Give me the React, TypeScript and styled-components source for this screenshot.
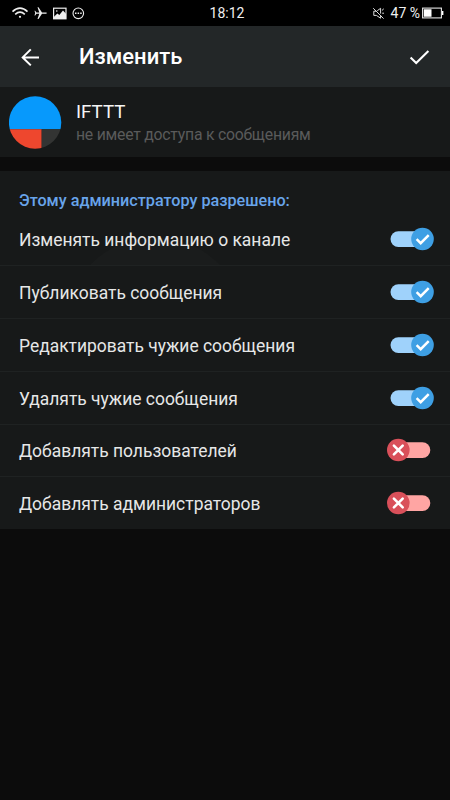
import React from 'react';
import styled, { createGlobalStyle } from 'styled-components';

const GlobalStyle = createGlobalStyle`
  * { box-sizing: border-box; }
  body { margin: 0; background: #0c0c0c; font-family: Roboto, sans-serif; }
`;

const Screen = styled.div`
  width: 450px;
  height: 800px;
  display: flex;
  flex-direction: column;
  background: #0c0c0c;
  overflow: hidden;
`;

const StatusBar = styled.header`
  height: 26px;
  display: grid;
  grid-template-columns: 1fr auto 1fr;
  align-items: center;
  background: #000;
  color: #f0f0f0;
  font-size: 14px;
  line-height: 26px;
  padding: 0 6px 0 11px;
`;

const StatusIcons = styled.div`
  display: flex;
  height: 26px;
`;

const Clock = styled.time`
  margin-right: 1px;
`;

const StatusRight = styled.div`
  display: flex;
  align-items: center;
  justify-content: flex-end;
  white-space: pre;
`;

const Percent = styled.span`
  margin: 0 2px 0 6px;
`;

const Toolbar = styled.div`
  height: 61px;
  display: flex;
  align-items: center;
  padding: 0 18px 0 18px;
  background: #232728;
`;

const IconButton = styled.button`
  display: flex;
  padding: 0;
  border: 0;
  background: none;
  color: #fff;
`;

const Title = styled.h1`
  flex: 1;
  margin: 0 0 0 37px;
  padding-top: 1px;
  color: #fff;
  font-size: 22px;
  font-weight: 500;
  line-height: 30px;
`;

const Profile = styled.section`
  height: 70px;
  display: flex;
  align-items: center;
  padding-left: 9px;
  background: #171919;
`;

const Names = styled.div`
  margin-left: 14px;
  padding-top: 1px;
`;

const Name = styled.div`
  color: #f5f5f5;
  font-size: 18.7px;
  line-height: 24px;
`;

const Access = styled.div`
  color: #5a5b5b;
  font-size: 15.8px;
  letter-spacing: -0.24px;
  line-height: 22px;
`;

const Permissions = styled.section`
  margin-top: 14px;
  height: 358.4px;
  background: #171919;
`;

const SectionTitle = styled.h2`
  margin: 0;
  height: 42px;
  padding: 18px 0 0 19px;
  color: #68a4ea;
  font-size: 16.2px;
  font-weight: 500;
  line-height: 24px;
`;

const List = styled.ul`
  margin: 0;
  padding: 0;
  list-style: none;
`;

const Row = styled.li<{ $glow: boolean }>`
  height: 52.88px;
  display: flex;
  align-items: center;
  justify-content: space-between;
  padding: 0 16px 0 19px;
  border-bottom: 1px solid #1f2222;
  background: ${(p) => (p.$glow ? 'radial-gradient(circle 90px at 155px 114px, #1a1c1c 99%, transparent 100%)' : 'none')};
  &:last-child { border-bottom-color: transparent; }
`;

const Label = styled.span`
  padding-top: 2px;
  color: #e6e7e7;
  font-size: 17.45px;
  line-height: 26px;
`;

const SwitchButton = styled.button`
  width: 47px;
  height: 24px;
  padding: 0;
  border: 0;
  background: none;
  display: flex;
  svg { display: block; }
`;

function Switch({ on }: { on: boolean }) {
  return (
    <SwitchButton role="switch" aria-checked={on}>
      <svg width="47" height="24" viewBox="0 0 47 24" fill="none">
        <rect x="3.5" y="4.2" width="39.8" height="15.8" rx="7.9" fill={on ? '#9fd2fb' : '#ffa5a3'} />
        <circle cx={on ? 35.5 : 11.3} cy="12" r="11.3" fill={on ? '#3e9fe4' : '#d9505a'} />
        {on ? (
          <path d="M29.6 12.2 33.7 16.2 41.7 8.1" stroke="#fff" strokeWidth="2.5" />
        ) : (
          <path d="M6.9 7.6 15.7 16.4 M15.7 7.6 6.9 16.4" stroke="#fff" strokeWidth="2.6" strokeLinecap="round" />
        )}
      </svg>
    </SwitchButton>
  );
}

const permissions = [
  { label: 'Изменять информацию о канале', on: true },
  { label: 'Публиковать сообщения', on: true },
  { label: 'Редактировать чужие сообщения', on: true },
  { label: 'Удалять чужие сообщения', on: true },
  { label: 'Добавлять пользователей', on: false },
  { label: 'Добавлять администраторов', on: false },
];

export default function App() {
  return (
    <>
      <GlobalStyle />
      <Screen>
        <StatusBar>
          <StatusIcons>
            <svg width="76" height="26" viewBox="11 0 76 26" fill="none" stroke="#eee">
              <path d="M12.5 11.6Q20 4.6 27.5 11.6M15.2 14.3Q20 10 24.8 14.3" strokeWidth="1.6" />
              <circle cx="20" cy="16.8" r="1.1" fill="#eee" stroke="none" />
              <path d="M47.2 13.1 46 12.4H42L38.5 7.2H37.5L39.3 12.4H36.4L35.2 10.7H34.5L35.2 13.1 34.5 15.5H35.2L36.4 13.8H39.3L37.5 19H38.5L42 13.8H46Z" fill="#eee" stroke="none" />
              <rect x="53.6" y="8.2" width="12.4" height="10.6" strokeWidth="1.2" />
              <path d="M54 16.8 57.4 13.4 59.3 15 63 10.6 66 13.8V19H54Z" fill="#eee" stroke="none" />
              <circle cx="56.8" cy="11" r=".8" fill="#eee" stroke="none" />
              <circle cx="78.3" cy="13.3" r="5.3" strokeWidth="1.1" />
              <path d="M75 13.3h1.5m1.1 0h1.5m1.1 0h1.5" strokeWidth="1.4" />
            </svg>
          </StatusIcons>
          <Clock>18:12</Clock>
          <StatusRight>
            <svg width="12" height="26" viewBox="0 0 12 26" fill="none" stroke="#ddd" strokeWidth="1">
              <path d="M4.2 10.8 7.6 8.3V13.6M3.4 11.2H.8V15.4H3.4L7.6 18.2V15.4M.2 8.2 10.6 18.6" />
              <path d="M9 10.4 10.8 8.8M9.2 13.2H11" />
            </svg>
            <Percent>47 %</Percent>
            <svg width="22" height="26" viewBox="0 0 22 26" fill="none">
              <rect x=".6" y="8.1" width="18.8" height="9.8" stroke="#e5e5e5" strokeWidth="1.1" />
              <path d="M1.8 9.3h7.7v7.4H1.8Z M20 11h1.4v4H20Z" fill="#fff" />
            </svg>
          </StatusRight>
        </StatusBar>
        <Toolbar>
          <IconButton aria-label="Назад">
            <svg width="24" height="24" viewBox="0 0 24 24" fill="none" stroke="currentColor" strokeWidth="2">
              <path d="M21 12.4H5M12.8 4.4 4.7 12.4 12.8 20.4" />
            </svg>
          </IconButton>
          <Title>Изменить</Title>
          <IconButton aria-label="Готово">
            <svg width="24" height="24" viewBox="0 0 24 24" fill="none" stroke="currentColor" strokeWidth="2.1">
              <path d="M2.6 12.6 8.2 18.1 20.4 6" />
            </svg>
          </IconButton>
        </Toolbar>
        <Profile>
          <svg width="53" height="53" viewBox="0 0 53 53">
            <clipPath id="avatar"><circle cx="26.1" cy="26.5" r="26.2" /></clipPath>
            <g clipPath="url(#avatar)">
              <path d="M0 0H53V33.2H0Z" fill="#0799fc" />
              <path d="M0 33.2H32.7V53H0Z" fill="#ee472e" />
              <path d="M32.7 33.2H53V53H32.7Z" fill="#333433" />
            </g>
          </svg>
          <Names>
            <Name>IFTTT</Name>
            <Access>не имеет доступа к сообщениям</Access>
          </Names>
        </Profile>
        <Permissions>
          <SectionTitle>Этому администратору разрешено:</SectionTitle>
          <List>
            {permissions.map((item, i) => (
              <Row key={item.label} $glow={i === 0}>
                <Label>{item.label}</Label>
                <Switch on={item.on} />
              </Row>
            ))}
          </List>
        </Permissions>
      </Screen>
    </>
  );
}
